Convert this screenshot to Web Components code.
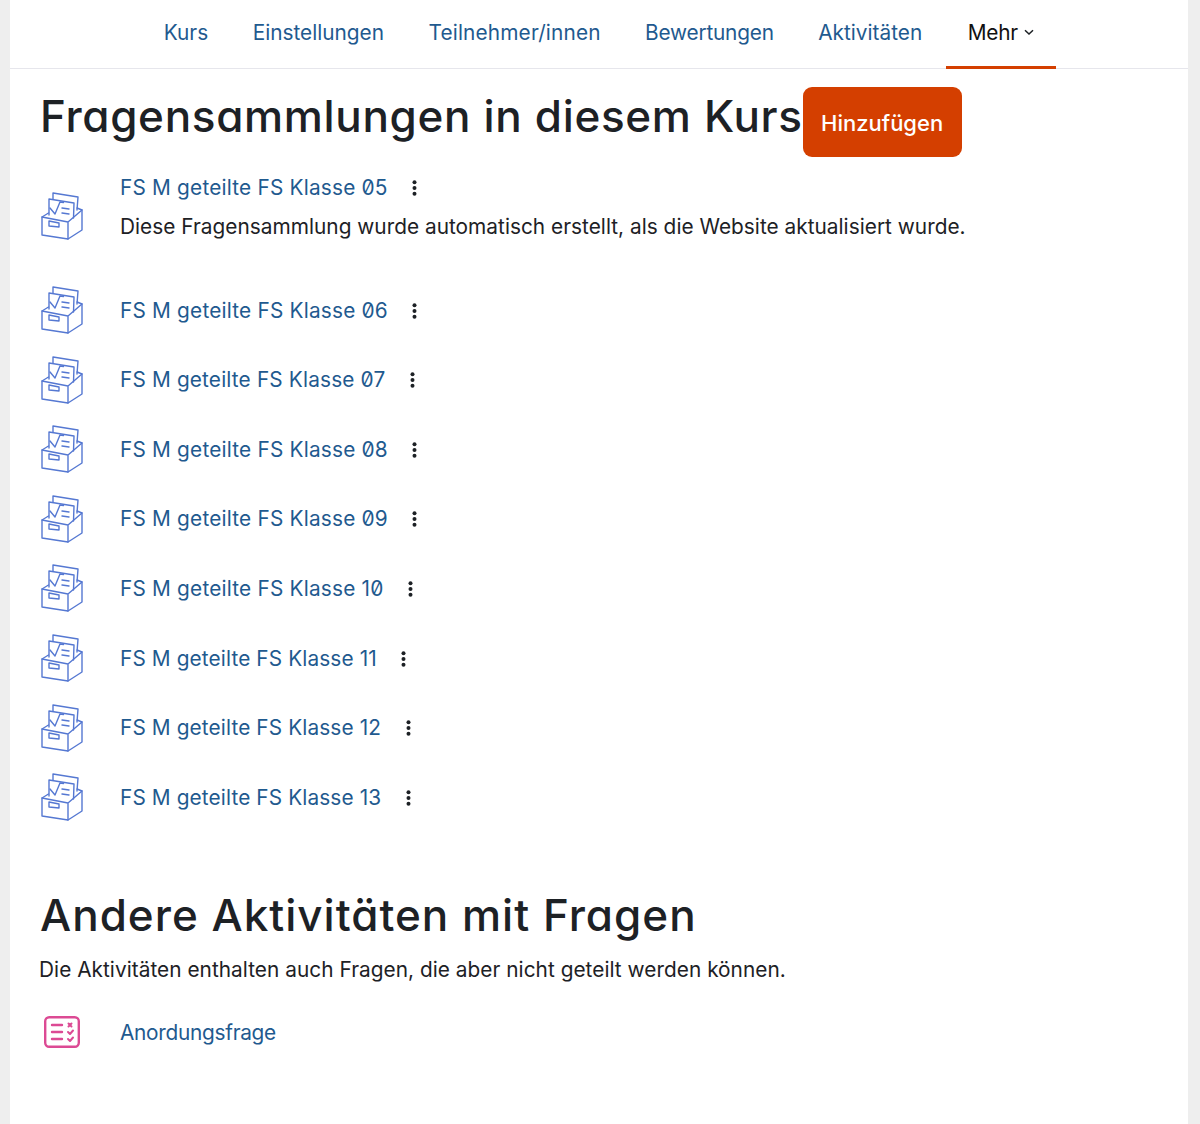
<!DOCTYPE html>
<html lang="de">
<head>
<meta charset="utf-8">
<title>Fragensammlungen</title>
<style>
html, body { margin: 0; background: #eeeeee; }
body { font-family: Inter, "Liberation Sans", sans-serif; color: #1d2125; }
</style>
</head>
<body>
<page-shell>
  <course-nav>
    <nav-tab>Kurs</nav-tab>
    <nav-tab>Einstellungen</nav-tab>
    <nav-tab style="letter-spacing:.15px">Teilnehmer/innen</nav-tab>
    <nav-tab style="letter-spacing:-.2px">Bewertungen</nav-tab>
    <nav-tab>Aktivitäten</nav-tab>
    <nav-tab active more style="letter-spacing:-.2px">Mehr</nav-tab>
  </course-nav>
  <section-title action="Hinzufügen">Fragensammlungen in diesem Kurs</section-title>
  <bank-list>
    <bank-row desc="Diese Fragensammlung wurde automatisch erstellt, als die Website aktualisiert wurde.">FS M geteilte FS Klasse 05</bank-row>
    <bank-row>FS M geteilte FS Klasse 06</bank-row>
    <bank-row style="letter-spacing:.16px">FS M geteilte FS Klasse 07</bank-row>
    <bank-row>FS M geteilte FS Klasse 08</bank-row>
    <bank-row>FS M geteilte FS Klasse 09</bank-row>
    <bank-row>FS M geteilte FS Klasse 10</bank-row>
    <bank-row style="letter-spacing:.12px">FS M geteilte FS Klasse 11</bank-row>
    <bank-row style="letter-spacing:.12px">FS M geteilte FS Klasse 12</bank-row>
    <bank-row style="letter-spacing:.12px">FS M geteilte FS Klasse 13</bank-row>
  </bank-list>
  <other-activities heading="Andere Aktivitäten mit Fragen" note="Die Aktivitäten enthalten auch Fragen, die aber nicht geteilt werden können.">
    <activity-row>Anordungsfrage</activity-row>
  </other-activities>
</page-shell>
<script>
const headingFont = `font-family: Inter, "Liberation Sans", sans-serif; font-feature-settings: "cv11", "ss03"; font-weight: 500;`;

class PageShell extends HTMLElement {
  constructor() {
    super();
    this.attachShadow({ mode: "open" }).innerHTML = `
<style>
:host { display: block; margin: 0 12px 0 10px; height: 1124px; background: #fff; overflow: hidden; }
</style>
<slot></slot>`;
  }
}

class CourseNav extends HTMLElement {
  constructor() {
    super();
    this.attachShadow({ mode: "open" }).innerHTML = `
<style>
:host { display: flex; height: 68px; padding-left: 131.5px; border-bottom: 1px solid #e6e6ec; }
</style>
<slot></slot>`;
  }
}

class NavTab extends HTMLElement {
  constructor() {
    super();
    const more = this.hasAttribute("more");
    this.attachShadow({ mode: "open" }).innerHTML = `
<style>
:host { display: flex; align-items: center; gap: 5px; padding: 0 22.25px 5px; height: 69px; box-sizing: border-box;
  font-size: 20.8px; color: #1f5a8f; }
:host([active]) { color: #111; border-bottom: 3px solid #d43f00; padding-bottom: 2px; margin-left: 2px; padding: 0 21.5px 2px 21.25px; }
svg { width: 12px; height: 12px; }
</style>
<slot></slot>
${more ? `<svg viewBox="0 0 12 12"><path d="M2 4.2 6 8 10 4.2" fill="none" stroke="#1d2125" stroke-width="1.5"/></svg>` : ""}`;
  }
}

class SectionTitle extends HTMLElement {
  constructor() {
    super();
    const action = this.getAttribute("action");
    this.attachShadow({ mode: "open" }).innerHTML = `
<style>
:host { display: flex; align-items: flex-start; padding: 17px 0 0 30px; height: 88px; box-sizing: border-box; }
h2 { margin: 0; ${headingFont} font-size: 44px; line-height: 60px; letter-spacing: .67px; color: #1d2125; white-space: nowrap; }
button { height: 70px; width: 159px; margin-top: 1px; border: 0; border-radius: 9px; background: #d43f00; color: #fff;
  font: 500 22px Inter, "Liberation Sans", sans-serif; padding: 2px 0 0; }
</style>
<h2><slot></slot></h2>
<button>${action}</button>`;
  }
}

class BankList extends HTMLElement {
  constructor() {
    super();
    this.attachShadow({ mode: "open" }).innerHTML = `
<style>
:host { display: block; padding-left: 30px; }
</style>
<slot></slot>`;
  }
}

class BankRow extends HTMLElement {
  constructor() {
    super();
    const desc = this.getAttribute("desc");
    this.attachShadow({ mode: "open" }).innerHTML = `
<style>
:host { display: flex; align-items: center; height: ${desc ? 118.8 : 69.6}px; letter-spacing: .2px; }
svg.icon { width: 44px; height: 48px; flex: none; margin: -1px 36px 0 0; }
.title { display: flex; align-items: center; gap: 24.5px; font-size: 20.8px; color: #1f5a8f;
  font-variant-numeric: slashed-zero; line-height: 30px; }
.desc { font-size: 20.8px; letter-spacing: .025px; color: #1d2125; line-height: 30px; margin-top: 9px; white-space: nowrap; }
.kebab { width: 5px; height: 16px; }
.body { ${desc ? "margin-bottom: 18px;" : ""} }
</style>
<svg class="icon" viewBox="0 0 44 48" fill="none" stroke="#5578d2" stroke-width="1.4" stroke-linejoin="round" stroke-linecap="round">
  <path d="M13 7 13 1 38 5 37 18"/>
  <path d="M9 23 9 7 34 11 33.5 26"/>
  <path d="M10 16 15 22 20 10 23.5 10.5"/>
  <path d="M22 16 29 17M22 21 29 22"/>
  <path d="M8.5 21 2 25 2 43 28 47 42 38 42 18 37 16"/>
  <path d="M2 25 28 30 42 18M28 30 28 47"/>
  <path d="M9 29 19 31 19 35 9 34Z"/>
</svg>
<div class="body">
  <div class="title"><span><slot></slot></span>
    <svg class="kebab" viewBox="0 0 5 16" fill="#1d2125"><circle cx="2.5" cy="2.2" r="2"/><circle cx="2.5" cy="8" r="2"/><circle cx="2.5" cy="13.8" r="2"/></svg>
  </div>
  ${desc ? `<div class="desc">${desc}</div>` : ""}
</div>`;
  }
}

class OtherActivities extends HTMLElement {
  constructor() {
    super();
    this.attachShadow({ mode: "open" }).innerHTML = `
<style>
:host { display: block; padding: 52.4px 0 0 30px; }
h2 { margin: 0; ${headingFont} font-size: 44px; line-height: 60px; letter-spacing: 1px; color: #1d2125; white-space: nowrap; }
p { margin: 9.6px 0 0 -1px; font-size: 20.8px; letter-spacing: .04px; line-height: 30px; color: #1d2125; }
</style>
<h2>${this.getAttribute("heading")}</h2>
<p>${this.getAttribute("note")}</p>
<slot></slot>`;
  }
}

class ActivityRow extends HTMLElement {
  constructor() {
    super();
    this.attachShadow({ mode: "open" }).innerHTML = `
<style>
:host { display: flex; align-items: center; height: 50px; margin-top: 23px; font-size: 20.8px; letter-spacing: -.27px; color: #1f5a8f; }
svg { width: 36px; height: 32px; margin: -1px 40px 0 4px; flex: none; }
</style>
<svg viewBox="0 0 36 32" fill="none" stroke="#dc4a94" stroke-width="2.4" stroke-linecap="round" stroke-linejoin="round">
  <rect x="1.2" y="1.2" width="33.6" height="29.6" rx="4"/>
  <path d="M8 9H18M8 16H18M8 23H18"/>
  <path d="M24.5 7.5 27.5 10.5M27.5 7.5 24.5 10.5M24 16 26 18 29 14.5M24 23 26 25 29 21.5" stroke-width="2"/>
</svg>
<slot></slot>`;
  }
}

customElements.define("page-shell", PageShell);
customElements.define("course-nav", CourseNav);
customElements.define("nav-tab", NavTab);
customElements.define("section-title", SectionTitle);
customElements.define("bank-list", BankList);
customElements.define("bank-row", BankRow);
customElements.define("other-activities", OtherActivities);
customElements.define("activity-row", ActivityRow);
</script>
</body>
</html>
